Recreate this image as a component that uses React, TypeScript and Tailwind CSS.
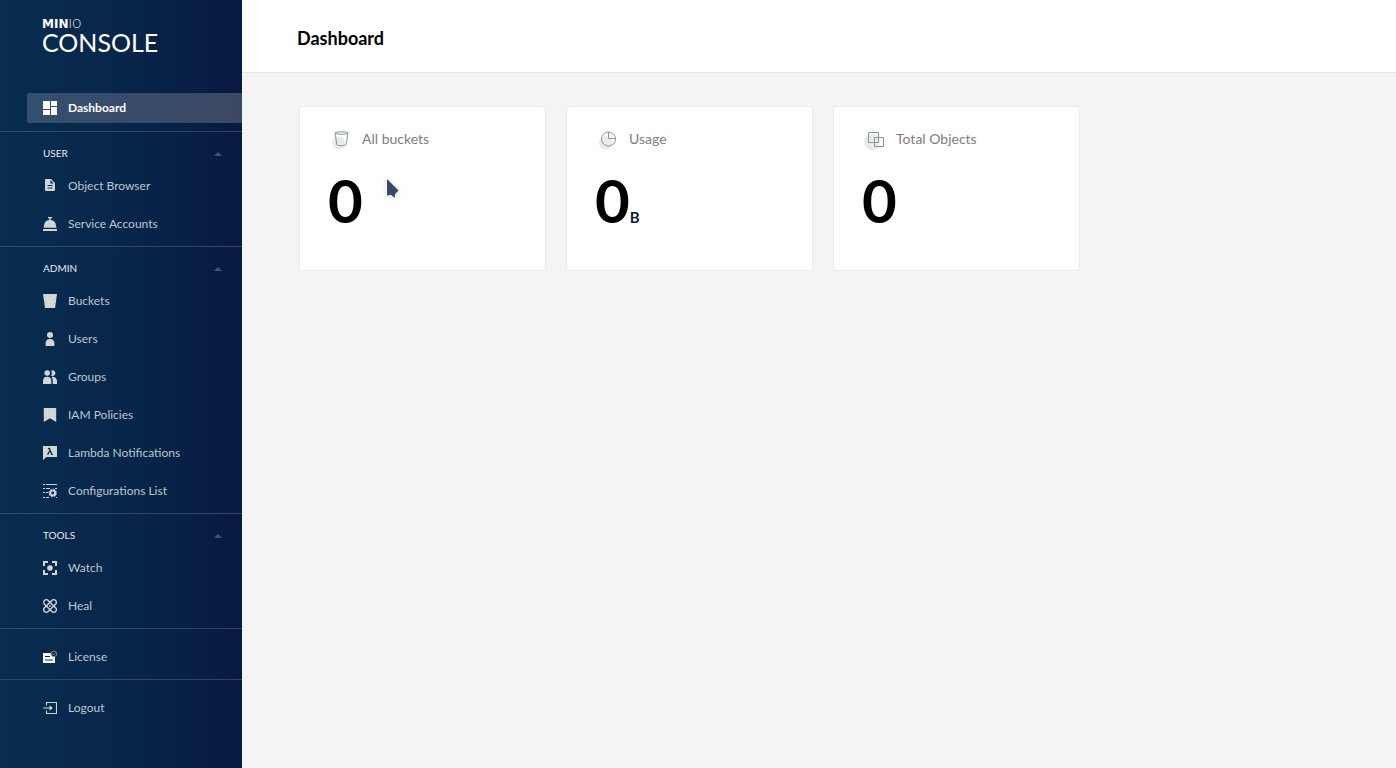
import type { ReactNode } from "react";

type IconProps = { children: ReactNode };

function Icon({ children }: IconProps) {
  return (
    <svg
      viewBox="0 0 14 14"
      className="h-3.5 w-3.5 shrink-0"
      fill="currentColor"
      aria-hidden="true"
    >
      {children}
    </svg>
  );
}

const icons = {
  dashboard: (
    <Icon>
      <path d="M0 0h7v8H0zM8 0h6v5H8zM0 9h7v5H0zM8 6h6v8H8z" />
    </Icon>
  ),
  file: (
    <Icon>
      <path
        fillRule="evenodd"
        d="M3 0h5l4 4v7a1 1 0 0 1-1 1H3a1 1 0 0 1-1-1V1a1 1 0 0 1 1-1zM7.4 1.2v3.3h3.3zM4.6 6v1h5V6zM4.6 8.5v1h5v-1z"
      />
    </Icon>
  ),
  service: (
    <Icon>
      <path d="M5 0h4v1.3H7.7V3A5.7 5.7 0 0 1 12.9 8l.5 2.8H.6L1.1 8A5.7 5.7 0 0 1 6.3 3V1.3H5zM0 12h14v2H0z" />
    </Icon>
  ),
  bucket: (
    <Icon>
      <path d="M0 0h14l-1.9 14H2z" />
      <g fill="#f6f8f9">
        <circle cx="4.5" cy="4" r=".5" />
        <circle cx="7.5" cy="5" r=".5" />
        <circle cx="9.8" cy="3.5" r=".5" />
        <circle cx="5" cy="7.5" r=".5" />
        <circle cx="8.5" cy="8" r=".5" />
        <circle cx="6.5" cy="10.5" r=".5" />
      </g>
    </Icon>
  ),
  user: (
    <Icon>
      <circle cx="7" cy="3" r="3" />
      <path d="M2.6 14v-2.6A4 4 0 0 1 6.6 7h.8a4 4 0 0 1 4 4.4V14z" />
    </Icon>
  ),
  groups: (
    <Icon>
      <circle cx="4.2" cy="3" r="2.8" />
      <path d="M0 14v-3.2A4.1 4.1 0 0 1 4.2 6.8a4.1 4.1 0 0 1 4.1 4V14zM8 .7a2.8 2.8 0 1 1 0 4.7 3.9 3.9 0 0 0 0-4.7zM8.4 7.1A4.1 4.1 0 0 1 14 10.8V14H9.8v-3.2c0-1.5-.5-2.8-1.4-3.7z" />
    </Icon>
  ),
  policy: (
    <Icon>
      <path d="M.8 0h12.4v14L7 10.2.8 14z" />
      <g fill="#f6f8f9">
        <circle cx="4.5" cy="4" r=".5" />
        <circle cx="7.5" cy="5" r=".5" />
        <circle cx="9.8" cy="3.5" r=".5" />
        <circle cx="5" cy="7.5" r=".5" />
        <circle cx="9" cy="7.8" r=".5" />
      </g>
    </Icon>
  ),
  lambda: (
    <Icon>
      <path d="M0 0h14v11H3.3L0 14z" />
      <path
        d="M4.9 2.5h1c.5 0 .7.2.9.7L8.6 8c.2.5.5.6 1.3.3M6.9 4.8 4.5 8.7"
        fill="none"
        stroke="#0a2849"
        strokeWidth="1.3"
      />
    </Icon>
  ),
  config: (
    <Icon>
      <path d="M0 0h2v1H0zM3 0h11v1H3zM0 4h2v1H0zM3 4h4v1H3zM12 4h2v1h-2zM0 8h2v1H0zM3 8h2v1H3zM0 13h2v1H0zM3 13h3v1H3zM13 13h1v1h-1z" />
      <circle cx="9.7" cy="9" r="2.5" fill="none" stroke="currentColor" strokeWidth="2.2" />
      <circle
        cx="9.7"
        cy="9"
        r="3.9"
        fill="none"
        stroke="currentColor"
        strokeWidth="1"
        strokeDasharray="1.53 1.53"
      />
    </Icon>
  ),
  watch: (
    <Icon>
      <path d="M0 0h5v2H2v3H0zM9 0h5v5h-2V2H9zM0 9h2v3h3v2H0zM12 9h2v5H9v-2h3z" />
      <circle cx="7" cy="7" r="2.8" />
    </Icon>
  ),
  heal: (
    <Icon>
      <g fill="none" stroke="currentColor" strokeWidth="1.4">
        <rect x="-.8" y="4.4" width="15.6" height="5.2" rx="2.6" transform="rotate(45 7 7)" />
        <rect x="-.8" y="4.4" width="15.6" height="5.2" rx="2.6" transform="rotate(-45 7 7)" />
      </g>
      <circle cx="7" cy="7" r=".9" />
    </Icon>
  ),
  license: (
    <Icon>
      <path
        fill="#fff"
        fillRule="evenodd"
        d="M0 3h7.8c.1 2 1.3 3.5 3.2 4h1v6H0zM2 6v1h5V6zM2 9.6v1h8v-1z"
      />
      <circle cx="10.9" cy="3.9" r="2.8" fill="none" stroke="#93a0ac" strokeWidth=".8" />
      <path d="m9.7 3.9.9.9 1.6-1.8" fill="none" stroke="#93a0ac" strokeWidth=".8" />
    </Icon>
  ),
  logout: (
    <Icon>
      <path
        d="M3.5 4.6V1.5h10v11h-10v-3"
        fill="none"
        stroke="currentColor"
        strokeWidth="1.1"
      />
      <path d="M0 6.4h6.6V4.2L9.8 7 6.6 9.8V7.6H0z" />
    </Icon>
  ),
};

type NavItemProps = { icon: ReactNode; label: string; active?: boolean };

function NavItem({ icon, label, active = false }: NavItemProps) {
  return (
    <a
      href="#"
      aria-current={active ? "page" : undefined}
      className={
        active
          ? "ml-[27px] flex h-[30px] items-center gap-[11px] rounded-l-[3px] bg-linear-to-r from-[#344f70] to-[#3b4863] pl-4 text-xs font-bold text-white"
          : "ml-[27px] flex h-[30px] items-center gap-[11px] pl-4 text-xs text-[#bcc7d1]"
      }
    >
      <span className={active ? "text-white" : "text-[#ced6d8]"}>{icon}</span>
      {label}
    </a>
  );
}

type NavSectionProps = { title: string; children: ReactNode };

function NavSection({ title, children }: NavSectionProps) {
  return (
    <section className="border-t border-[#36455f] pb-[7px]">
      <button
        type="button"
        aria-expanded="true"
        className="flex h-[39px] w-full items-start justify-between pt-[13px] pr-5 pl-[43px] text-[10px] leading-4 text-[#e6ebef] uppercase"
      >
        {title}
        <svg viewBox="0 0 8 4" className="mt-[7px] h-1 w-2" fill="#3d5576" aria-hidden="true">
          <path d="M0 4 4 0l4 4z" />
        </svg>
      </button>
      <div className="flex flex-col gap-2">{children}</div>
    </section>
  );
}

function Sidebar() {
  return (
    <nav className="w-[242px] shrink-0 bg-linear-to-r from-[#082d4e] via-[#08264a] to-[#081a42]">
      <div className="flex h-[93px] flex-col pt-[18px] pl-[42px] text-white">
        <div className="font-['DejaVu_Sans'] text-xs leading-3">
          <span className="font-bold">MIN</span>
          <span className="font-extralight">IO</span>
        </div>
        <div className="text-[25px] leading-6">CONSOLE</div>
      </div>
      <div className="pb-2">
        <NavItem icon={icons.dashboard} label="Dashboard" active />
      </div>
      <NavSection title="User">
        <NavItem icon={icons.file} label="Object Browser" />
        <NavItem icon={icons.service} label="Service Accounts" />
      </NavSection>
      <NavSection title="Admin">
        <NavItem icon={icons.bucket} label="Buckets" />
        <NavItem icon={icons.user} label="Users" />
        <NavItem icon={icons.groups} label="Groups" />
        <NavItem icon={icons.policy} label="IAM Policies" />
        <NavItem icon={icons.lambda} label="Lambda Notifications" />
        <NavItem icon={icons.config} label="Configurations List" />
      </NavSection>
      <NavSection title="Tools">
        <NavItem icon={icons.watch} label="Watch" />
        <NavItem icon={icons.heal} label="Heal" />
      </NavSection>
      <div className="border-t border-[#36455f] pt-[13px] pb-[7px]">
        <NavItem icon={icons.license} label="License" />
      </div>
      <div className="border-t border-[#36455f] pt-[13px]">
        <NavItem icon={icons.logout} label="Logout" />
      </div>
    </nav>
  );
}

type CardIconProps = { wide?: boolean; children: ReactNode };

function CardIcon({ wide = false, children }: CardIconProps) {
  return (
    <svg
      viewBox="0 0 20 20"
      className="h-5 w-5 shrink-0 overflow-visible"
      fill="none"
      stroke="#86979a"
      strokeWidth="1"
      aria-hidden="true"
    >
      <circle
        cx={wide ? 6 : 6.5}
        cy={wide ? 13 : 14}
        r={wide ? 8 : 6.5}
        fill="#e8eaeb"
        stroke="none"
      />
      {children}
    </svg>
  );
}

type StatCardProps = { icon: ReactNode; title: string; value: string; unit?: string };

function StatCard({ icon, title, value, unit }: StatCardProps) {
  return (
    <article className="h-[165px] w-[247px] rounded-[3px] border border-[#eaeaea] bg-white pt-[22px] pr-6 pl-7">
      <h2 className="flex items-center gap-2.5 pl-1 text-sm text-[#857b79]">
        {icon}
        {title}
      </h2>
      <p className="mt-[21px] flex items-baseline font-bold">
        <span className="text-[60px] leading-[60px] text-black">{value}</span>
        {unit && <span className="text-[15px] leading-5 text-[#07193e]">{unit}</span>}
      </p>
    </article>
  );
}

export default function App() {
  return (
    <div className="relative flex min-h-screen bg-[#f4f4f4] font-[Lato,sans-serif]">
      <Sidebar />
      <main className="min-w-0 flex-1">
        <header className="flex h-[73px] items-center border-b border-[#e6e6e6] bg-white pt-1 pr-6 pl-[55px]">
          <h1 className="text-lg font-bold text-black">Dashboard</h1>
        </header>
        <div className="flex flex-wrap gap-5 py-[33px] pr-6 pl-[57px]">
          <StatCard
            title="All buckets"
            value="0"
            icon={
              <CardIcon>
                <ellipse cx="9.5" cy="4" rx="6.5" ry="1.2" />
                <path d="m3 4 1.8 11.3c.1.6.5 1 1.1 1.1 2.4.4 4.8.4 7.2 0 .6-.1 1-.5 1.1-1.1L16 4" />
              </CardIcon>
            }
          />
          <StatCard
            title="Usage"
            value="0"
            unit="B"
            icon={
              <CardIcon>
                <circle cx="9.5" cy="10" r="7" />
                <path d="M9.5 3v6.5h7" />
              </CardIcon>
            }
          />
          <StatCard
            title="Total Objects"
            value="0"
            icon={
              <CardIcon wide>
                <path d="M2.5 3.5h10v10h-10zM8.5 8.5h9v9h-9z" />
              </CardIcon>
            }
          />
        </div>
      </main>
      <svg
        viewBox="0 0 16 24"
        className="pointer-events-none absolute top-[177px] left-[385px] h-6 w-4 drop-shadow-sm"
        aria-hidden="true"
      >
        <path
          d="M2 2v16.5l4.2-.6L9.6 21l.6-4 3.4-3.6z"
          fill="#3a4967"
          stroke="#fff"
          strokeWidth="1.6"
          paintOrder="stroke"
        />
      </svg>
    </div>
  );
}
